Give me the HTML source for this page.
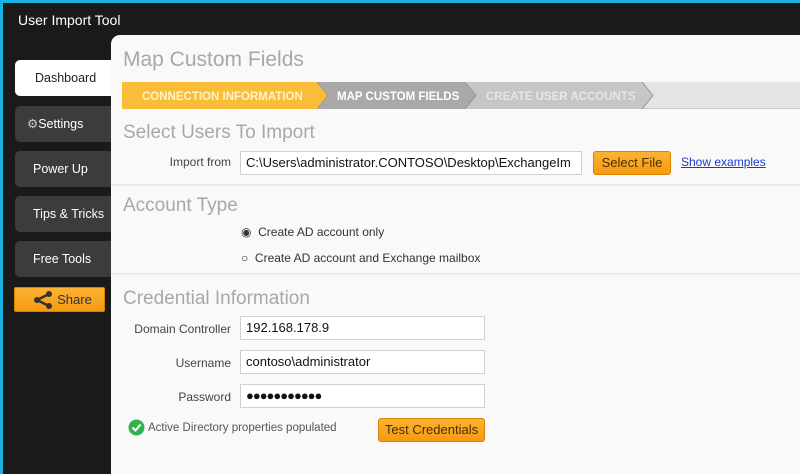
<!DOCTYPE html>
<html><head><style>
*{margin:0;padding:0;box-sizing:border-box}
body{width:800px;height:474px;overflow:hidden;background:#1a1a1a;font-family:"Liberation Sans",sans-serif;position:relative}
.cy1{position:absolute;left:0;top:0;width:800px;height:3px;background:#1ab0e0}
.cy2{position:absolute;left:0;top:0;width:3px;height:474px;background:#1ab0e0}
.title{position:absolute;left:18px;top:12px;color:#fff;font-size:14px}
.nav{position:absolute;left:15px;width:97px;height:36px;background:#3c3c3c;border-radius:5px 0 0 5px;color:#fff;font-size:12.5px;line-height:36px;padding-left:18px}
.panel{position:absolute;left:111px;top:35px;width:689px;height:439px;background:#f9f9f9;border-radius:9px 0 0 0}
.a{position:absolute}
h1{position:absolute;font-weight:normal;color:#a8a8a8;font-size:21px}
.lbl{position:absolute;font-size:12px;color:#444;text-align:right}
.inp{position:absolute;background:#fff;border:1px solid #cfcfcf;height:24px;font-size:13px;color:#111;padding:3px 5px;white-space:nowrap;overflow:hidden}
.btn{position:absolute;background:linear-gradient(#fdb233,#f59a10);border:1px solid #d98400;border-radius:3px;color:#4a3000;font-size:13px;text-align:center}
.hr{position:absolute;left:0;width:689px;height:2px;background:#ececec}
</style></head><body>
<div class="cy1"></div><div class="cy2"></div>
<div class="title">User Import Tool</div>
<div class="nav" style="top:60px;background:#fff;color:#222;padding-left:20px">Dashboard</div>
<div class="nav" style="top:106px;padding-left:12px"><span style="color:#ccc">⚙</span>Settings</div>
<div class="nav" style="top:151px">Power Up</div>
<div class="nav" style="top:196px">Tips &amp; Tricks</div>
<div class="nav" style="top:241px">Free Tools</div>
<div class="btn" style="left:14px;top:287px;width:91px;height:25px;line-height:23px;color:#333;font-size:13px;border-radius:2px">
<svg width="22" height="18" viewBox="0 0 22 18" style="position:absolute;left:17px;top:3px"><path d="M17 3L5 9L17 15" stroke="#333" stroke-width="2.5" fill="none"/><circle cx="17" cy="3" r="3" fill="#333"/><circle cx="5" cy="9" r="3" fill="#333"/><circle cx="17" cy="15" r="3" fill="#333"/></svg>
<span style="margin-left:30px">Share</span></div>
<div class="panel">
<h1 style="left:12px;top:13px">Map Custom Fields</h1>
<div class="a" style="left:11px;top:47px;width:678px;height:27px;background:#e4e4e4;border-bottom:1px solid #ccc"></div>
<svg class="a" style="left:11px;top:47px" width="540" height="27">
<polygon points="0,0 195,0 206,13.5 195,27 0,27" fill="#f9bd3a"/>
<polygon points="195,0 343,0 354,13.5 343,27 195,27 206,13.5" fill="#a9a9a9"/>
<polygon points="343,0 520,0 531,13.5 520,27 343,27 354,13.5" fill="#c6c6c6"/>
<path d="M195,0 206,13.5 195,27 M343,0 354,13.5 343,27 M520,0 531,13.5 520,27" stroke="#999" fill="none"/>
<text x="20" y="18" font-family="Liberation Sans" font-size="11.5" font-weight="bold" fill="#fff3c8">CONNECTION INFORMATION</text>
<text x="215" y="18" font-family="Liberation Sans" font-size="11.5" font-weight="bold" fill="#fff">MAP CUSTOM FIELDS</text>
<text x="364" y="18" font-family="Liberation Sans" font-size="11.5" font-weight="bold" fill="#e6e6e6">CREATE USER ACCOUNTS</text>
</svg>
<h1 style="left:12px;top:87px;font-size:19px">Select Users To Import</h1>
<div class="lbl" style="left:40px;top:120px;width:80px">Import from</div>
<div class="inp" style="left:129px;top:116px;width:342px">C:\Users\administrator.CONTOSO\Desktop\ExchangeIm</div>
<div class="btn" style="left:482px;top:116px;width:78px;height:24px;line-height:22px">Select File</div>
<div class="a" style="left:570px;top:120px;font-size:12px;color:#1a3ccc;text-decoration:underline">Show examples</div>
<div class="hr" style="top:149px"></div>
<h1 style="left:12px;top:160px;font-size:19px">Account Type</h1>
<div class="a" style="left:130px;top:190px;font-size:12px;color:#333">◉&nbsp; Create AD account only</div>
<div class="a" style="left:130px;top:216px;font-size:12px;color:#333">○&nbsp; Create AD account and Exchange mailbox</div>
<div class="hr" style="top:238px"></div>
<h1 style="left:12px;top:253px;font-size:19px">Credential Information</h1>
<div class="lbl" style="left:10px;top:287px;width:110px">Domain Controller</div>
<div class="inp" style="left:129px;top:281px;width:245px">192.168.178.9</div>
<div class="lbl" style="left:10px;top:321px;width:110px">Username</div>
<div class="inp" style="left:129px;top:315px;width:245px">contoso\administrator</div>
<div class="lbl" style="left:10px;top:355px;width:110px">Password</div>
<div class="inp" style="left:129px;top:349px;width:245px;letter-spacing:-1px">●●●●●●●●●●●</div>
<svg class="a" style="left:17px;top:384px" width="17" height="17"><circle cx="8.5" cy="8.5" r="8" fill="#2db34a"/><path d="M4.5 8.5l3 3 5-6" stroke="#fff" stroke-width="2" fill="none"/></svg>
<div class="a" style="left:37px;top:387px;font-size:11.5px;color:#555">Active Directory properties populated</div>
<div class="btn" style="left:267px;top:383px;width:107px;height:24px;line-height:22px">Test Credentials</div>
</div>
</body></html>
